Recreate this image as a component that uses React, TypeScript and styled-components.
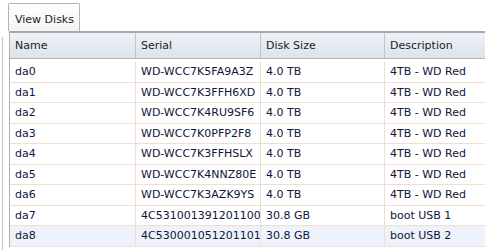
import React from "react";
import styled, { createGlobalStyle } from "styled-components";

const Global = createGlobalStyle`
  html, body { margin: 0; padding: 0; background: #fff; }
  body { font-family: "DejaVu Sans", Verdana, sans-serif; font-size: 11px; color: #1c1c2c; overflow: hidden; }
`;

const Page = styled.div`
  display: flex;
  width: 485px;
  height: 250px;
  overflow: hidden;
`;

const Gutter = styled.div`
  width: 6px;
  margin-left: 2px;
  margin-top: 37px;
  border-left: 1px solid #c4c4c4;
  flex: none;
`;

const Main = styled.div`
  display: flex;
  flex-direction: column;
  flex: none;
  padding-top: 3px;
`;

const TabBar = styled.div`
  display: flex;
  height: 28px;
`;

const Tab = styled.div`
  margin-left: -1px;
  width: 72px;
  height: 28px;
  border: 1px solid #b4b4b4;
  border-bottom: none;
  border-radius: 2px 2px 0 0;
  background: linear-gradient(#ffffff, #f3f4f6);
  display: flex;
  align-items: center;
  padding-left: 6px;
  box-sizing: border-box;
  padding-top: 3px;
  color: #222;
`;

const Table = styled.div`
  width: 600px;
  border-left: 1px solid #b0b0b0;
  border-top: 2px solid #a9a9a9;
`;

const Body = styled.div`
  padding-top: 3px;
`;

const Row = styled.div<{ $head?: boolean; $alt?: boolean }>`
  display: grid;
  grid-template-columns: 126px 125px 124px 1fr;
  height: ${(p) => (p.$head ? "25px" : "19.5px")};
  background: ${(p) =>
    p.$head ? "linear-gradient(#eff2f7, #dce3ec)" : p.$alt ? "#eef3fb" : "#fff"};
  border-bottom: 1px solid ${(p) => (p.$head ? "#b6b6b6" : "#f0dfd0")};
`;

const Cell = styled.div<{ $head?: boolean }>`
  display: flex;
  align-items: center;
  padding-left: 5px;
  white-space: nowrap;
  overflow: hidden;
  border-right: 1px solid ${(p) => (p.$head ? "#c4c4c4" : "#f0dfd0")};
  color: ${(p) => (p.$head ? "#222" : "#10143a")};
`;

const disks = [
  ["da0", "WD-WCC7K5FA9A3Z", "4.0 TB", "4TB - WD Red"],
  ["da1", "WD-WCC7K3FFH6XD", "4.0 TB", "4TB - WD Red"],
  ["da2", "WD-WCC7K4RU9SF6", "4.0 TB", "4TB - WD Red"],
  ["da3", "WD-WCC7K0PFP2F8", "4.0 TB", "4TB - WD Red"],
  ["da4", "WD-WCC7K3FFHSLX", "4.0 TB", "4TB - WD Red"],
  ["da5", "WD-WCC7K4NNZ80E", "4.0 TB", "4TB - WD Red"],
  ["da6", "WD-WCC7K3AZK9YS", "4.0 TB", "4TB - WD Red"],
  ["da7", "4C531001391201100", "30.8 GB", "boot USB 1"],
  ["da8", "4C530001051201101", "30.8 GB", "boot USB 2"],
];

export default function App() {
  return (
    <>
      <Global />
      <Page>
        <Gutter />
        <Main>
          <TabBar>
            <Tab>View Disks</Tab>
          </TabBar>
          <Table>
            <Row $head>
              {["Name", "Serial", "Disk Size", "Description"].map((h) => (
                <Cell $head key={h}>{h}</Cell>
              ))}
            </Row>
            <Body>
              {disks.map((d, i) => (
                <Row key={d[0]} $alt={i === disks.length - 1}>
                  {d.map((c, j) => (
                    <Cell key={j}>{c}</Cell>
                  ))}
                </Row>
              ))}
            </Body>
          </Table>
        </Main>
      </Page>
    </>
  );
}
